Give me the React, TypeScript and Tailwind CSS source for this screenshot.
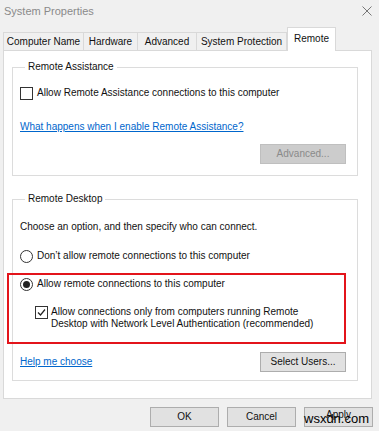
import React from 'react';

const Check = () => (
  <svg width="9" height="9" viewBox="0 0 9 9" className="block">
    <path d="M1 4.5 L3.5 7 L8 1.5" fill="none" stroke="#222" strokeWidth="1.2" />
  </svg>
);

const Checkbox = ({ checked }: { checked?: boolean }) => (
  <span className="flex h-[13px] w-[13px] shrink-0 items-center justify-center border border-[#333] bg-white">
    {checked && <Check />}
  </span>
);

const Radio = ({ checked }: { checked?: boolean }) => (
  <span className="flex h-[13px] w-[13px] shrink-0 items-center justify-center rounded-full border border-[#333] bg-white">
    {checked && <span className="h-[7px] w-[7px] rounded-full bg-[#222]" />}
  </span>
);

const Button = ({ label, disabled, className = '' }: { label: string; disabled?: boolean; className?: string }) => (
  <div
    className={`flex h-[20px] items-center justify-center border ${
      disabled ? 'border-[#bfbfbf] bg-[#cccccc] text-[#8a8a8a]' : 'border-[#adadad] bg-[#e1e1e1] text-[#111]'
    } ${className}`}
  >
    {label}
  </div>
);

const tabs = ['Computer Name', 'Hardware', 'Advanced', 'System Protection'];
const tabWidths = ['w-[81px]', 'w-[54px]', 'w-[59px]', 'w-[90px]'];

export default function App() {
  return (
    <div
      className="relative h-[431px] w-[379px] overflow-hidden bg-[#f0f0f0] text-[10px] leading-[12px] text-[#111]"
      style={{ fontFamily: '"Liberation Sans", Arial, sans-serif' }}
    >
      {/* title bar */}
      <div className="flex h-[21px] items-center justify-between pl-[4px] pr-[7px]">
        <span className="text-[11px] text-[#8a8a8a]">System Properties</span>
        <svg width="10" height="10" viewBox="0 0 10 10">
          <path d="M0.5 0.5 L9.5 9.5 M9.5 0.5 L0.5 9.5" stroke="#777" strokeWidth="1" />
        </svg>
      </div>

      {/* tabs */}
      <div className="relative z-10 ml-[3px] mt-[6px] flex h-[23px] items-end">
        {tabs.map((t, i) => (
          <div
            key={t}
            className={`flex h-[18px] items-center justify-center border border-b-0 border-[#d9d9d9] ${
              i > 0 ? 'border-l-0' : ''
            } ${tabWidths[i]}`}
          >
            {t}
          </div>
        ))}
        <div className="-mb-[1px] flex h-[24px] w-[49px] items-start justify-center border border-b-0 border-[#d9d9d9] bg-white pt-[5px]">
          Remote
        </div>
      </div>

      {/* panel */}
      <div className="mx-[3px] w-[369px] border border-[#d9d9d9] bg-white pb-[17px]">
        <fieldset className="ml-[8px] mt-[10px] w-[346px] border border-[#dcdcdc] pb-[11px] pl-[7px]">
          <legend className="ml-[5px] px-[3px]">Remote Assistance</legend>
          <div className="mt-[13px] flex h-[14px] items-center gap-[4px]">
            <Checkbox />
            <span>Allow Remote Assistance connections to this computer</span>
          </div>
          <div className="mt-[21px] h-[12px] text-[#0066cc] underline">
            What happens when I enable Remote Assistance?
          </div>
          <div className="mt-[11px] flex justify-end pr-[11px]">
            <Button label="Advanced..." disabled className="w-[86px]" />
          </div>
        </fieldset>

        <fieldset className="ml-[8px] mt-[17px] w-[346px] border border-[#dcdcdc] pb-[8px] pl-[7px]">
          <legend className="ml-[5px] px-[3px]">Remote Desktop</legend>
          <div className="mt-[16px] h-[12px]">Choose an option, and then specify who can connect.</div>
          <div className="mt-[16px] flex h-[14px] items-center gap-[4px]">
            <Radio />
            <span>Don&#8217;t allow remote connections to this computer</span>
          </div>
          <div className="mt-[14px] flex h-[14px] items-center gap-[4px]">
            <Radio checked />
            <span>Allow remote connections to this computer</span>
          </div>
          <div className="mt-[15px] flex gap-[3px] pl-[15px]">
            <Checkbox checked />
            <span>
              Allow connections only from computers running Remote
              <br />
              Desktop with Network Level Authentication (recommended)
            </span>
          </div>
          <div className="mt-[22px] flex h-[20px] items-center justify-between pr-[11px]">
            <span className="text-[#0066cc] underline">Help me choose</span>
            <Button label="Select Users..." className="w-[86px]" />
          </div>
        </fieldset>
      </div>

      {/* dialog buttons */}
      <div className="mt-[8px] flex justify-end gap-[8px] pr-[6px]">
        <Button label="OK" className="w-[69px]" />
        <Button label="Cancel" className="w-[69px]" />
        <Button label="Apply" className="w-[69px] items-start pt-[1px]" />
      </div>

      {/* annotation and watermark */}
      <div className="absolute left-[7px] top-[273px] h-[71px] w-[339px] border-2 border-[#e3141b]" />
      <span className="absolute left-[304px] top-[412px] text-[13px] leading-[14px] text-black">wsxdn.com</span>
    </div>
  );
}
